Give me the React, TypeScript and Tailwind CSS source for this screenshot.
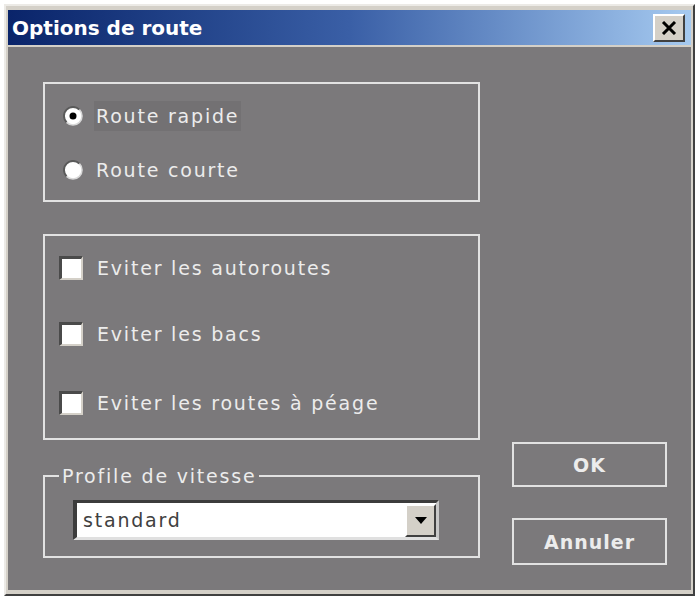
import React from 'react';

const font = "font-['DejaVu_Sans',sans-serif]";

const Radio = ({ checked }: { checked?: boolean }) => (
  <svg width="20" height="20" viewBox="0 0 20 20" className="shrink-0">
    <circle cx="10" cy="10" r="9" fill="#ffffff" />
    <path d="M3.6 16.4 A9 9 0 0 1 16.4 3.6" fill="none" stroke="#5a5a5a" strokeWidth="2" />
    <path d="M16.4 3.6 A9 9 0 0 1 3.6 16.4" fill="none" stroke="#d8d8d8" strokeWidth="1.5" />
    {checked && <circle cx="10" cy="10" r="3.5" fill="#000000" />}
  </svg>
);

const Checkbox = () => (
  <div className="w-[24px] h-[24px] shrink-0 border-t-[3px] border-l-[3px] border-t-[#4a4a4a] border-l-[#4a4a4a] border-b-2 border-r-2 border-b-[#d4d0c8] border-r-[#d4d0c8] bg-white" />
);

export default function App() {
  const options = ['Eviter les autoroutes', 'Eviter les bacs', 'Eviter les routes à péage'];

  return (
    <div className={`w-[698px] h-[598px] bg-white pl-[4px] pt-[4px] ${font}`}>
      <div className="w-[691px] h-[592px] flex flex-col bg-[#d4d0c8] border-2 border-t-[#eceae6] border-l-[#eceae6] border-r-[#404040] border-b-[#404040] px-[2px] pt-[4px] pb-[4px]">
        {/* Title bar */}
        <div className="h-[35px] shrink-0 flex items-center justify-between pl-[4px] pr-[6px] bg-linear-to-r from-[#0a246a] via-[#3a5fa6] to-[#a6caf0]">
          <span className="text-white font-bold text-[20px] leading-none">Options de route</span>
          <div className="w-[32px] h-[28px] flex items-center justify-center bg-[#d4d0c8] border-2 border-t-white border-l-white border-r-[#404040] border-b-[#404040]">
            <svg width="16" height="14" viewBox="0 0 16 14">
              <path d="M2 1 L14 13 M14 1 L2 13" stroke="#000" strokeWidth="3" />
            </svg>
          </div>
        </div>

        {/* Body */}
        <div className="mt-[2px] flex-1 bg-[#7b797b] flex text-[#ececec] text-[19px] leading-[22px] tracking-[1.8px]">
          <div className="pl-[35px] pt-[35px] flex flex-col w-[472px]">
            {/* Route type */}
            <div className="h-[120px] border-2 border-[#e2e2e2] pl-[18px] pt-[17px] flex flex-col gap-[24px]">
              <div className="h-[30px] flex items-center gap-[11px]">
                <Radio checked />
                <span className="h-[30px] flex items-center px-[2px] bg-[#737173]">Route rapide</span>
              </div>
              <div className="h-[30px] flex items-center gap-[11px]">
                <Radio />
                <span className="px-[2px]">Route courte</span>
              </div>
            </div>

            {/* Avoid options */}
            <div className="mt-[32px] h-[206px] border-2 border-[#e2e2e2] pl-[14px] pt-[17px] flex flex-col">
              {options.map((label, i) => (
                <div key={label} className={`h-[30px] flex items-center gap-[14px] ${i === 1 ? 'mt-[36px]' : i === 2 ? 'mt-[39px]' : ''}`}>
                  <Checkbox />
                  <span>{label}</span>
                </div>
              ))}
            </div>

            {/* Speed profile */}
            <fieldset className="mt-[25px] border-2 border-[#e2e2e2] pl-[28px] pr-[37px] pt-[13px] pb-[16px]">
              <legend className="-ml-[14px] px-[3px] leading-[22px]">Profile de vitesse</legend>
              <div className="h-[40px] w-[366px] flex border-t-[3px] border-l-[4px] border-t-[#3c3c3c] border-l-[#3c3c3c] border-b-[3px] border-r-[3px] border-b-[#e0e0e0] border-r-[#c8c8c8] bg-white">
                <span className="flex-1 flex items-center pl-[6px] text-[#404040]">standard</span>
                <div className="w-[31px] h-[33px] mt-px flex items-center justify-center bg-[#d4d0c8] border-2 border-t-white border-l-white border-r-[#404040] border-b-[#404040]">
                  <svg width="12" height="7" viewBox="0 0 12 7">
                    <path d="M0 0 L12 0 L6 7 Z" fill="#000" />
                  </svg>
                </div>
              </div>
            </fieldset>
          </div>

          {/* Buttons */}
          <div className="pl-[32px] pt-[395px] flex flex-col gap-[31px] tracking-[1px] font-bold">
            <div className="w-[155px] h-[45px] border-2 border-[#e2e2e2] flex items-center justify-center">OK</div>
            <div className="w-[155px] h-[47px] border-2 border-[#e2e2e2] flex items-center justify-center">Annuler</div>
          </div>
        </div>
      </div>
    </div>
  );
}
